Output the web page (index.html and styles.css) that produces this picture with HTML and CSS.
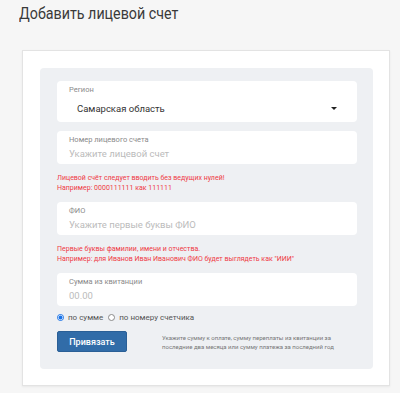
FILE: index.html
```html
<!DOCTYPE html>
<html lang="ru">
<head>
<meta charset="utf-8">
<title>Добавить лицевой счет</title>
<link rel="stylesheet" href="styles.css">
</head>
<body>
<h1 class="title"><span class="title-text">Добавить лицевой счет</span></h1>
<div class="card">
  <form class="panel">
    <div class="field field-select">
      <div class="label">Регион</div>
      <div class="select">
        <span class="select-value">Самарская область</span>
        <span class="caret"></span>
      </div>
    </div>
    <div class="field">
      <div class="label">Номер лицевого счета</div>
      <div class="placeholder">Укажите лицевой счет</div>
    </div>
    <div class="error">Лицевой счёт следует вводить без ведущих нулей!<br>Например: 0000111111 как 111111</div>
    <div class="field">
      <div class="label">ФИО</div>
      <div class="placeholder">Укажите первые буквы ФИО</div>
    </div>
    <div class="error">Первые буквы фамилии, имени и отчества.<br>Например: для Иванов Иван Иванович ФИО будет выглядеть как "ИИИ"</div>
    <div class="field">
      <div class="label">Сумма из квитанции</div>
      <div class="placeholder">00.00</div>
    </div>
    <div class="radios">
      <span class="radio radio-on"></span><span class="radio-text">по сумме</span>
      <span class="radio"></span><span class="radio-text">по номеру счетчика</span>
    </div>
    <div class="actions">
      <button type="button" class="btn">Привязать</button>
      <div class="hint">Укажите сумму к оплате, сумму переплаты из квитанции за<br>последние два месяца или сумму платежа за последний год</div>
    </div>
  </form>
</div>
</body>
</html>
```
FILE: styles.css
```css
html, body {
  margin: 0;
  padding: 0;
}
body {
  background: #f6f6f6;
  font-family: Roboto, "Noto Sans", sans-serif;
  color: #333;
  width: 400px;
  height: 393px;
  overflow: hidden;
}
.title {
  margin: 0;
  padding: 1px 19px 0;
  height: 50px;
  box-sizing: border-box;
  font-family: Roboto, sans-serif;
  font-weight: 400;
  font-size: 17px;
  line-height: 24px;
  color: #3a3a3a;
}
.title-text {
  display: inline-block;
  transform: scaleX(0.84);
  transform-origin: left center;
  white-space: nowrap;
}
.card {
  margin-left: 22px;
  width: 368px;
  box-sizing: border-box;
  background: #fff;
  border: 1px solid #e3e3e3;
  box-shadow: 0 1px 2px rgba(0,0,0,0.06);
  padding: 17px 16px 16px 17px;
}
.panel {
  margin: 0;
  background: #eef0f3;
  border-radius: 4px;
  padding: 13px 16px 17px 17px;
}
.field {
  background: #fff;
  border-radius: 4px;
  padding: 4px 12px 1px;
}
.field + .field {
  margin-top: 9px;
}
.label {
  font-size: 7.5px;
  line-height: 10px;
  color: #8a8a8a;
}
.placeholder {
  font-size: 9.5px;
  line-height: 18px;
  color: #bbbbbb;
}
.select {
  display: flex;
  align-items: center;
  justify-content: space-between;
  height: 26px;
  padding: 0 8px 0 8px;
}
.select-value {
  font-size: 9.5px;
  color: #333;
}
.caret {
  width: 0;
  height: 0;
  border-left: 3px solid transparent;
  border-right: 3px solid transparent;
  border-top: 3px solid #222;
}
.error {
  margin: 9px 0;
  font-size: 7px;
  line-height: 10px;
  color: #ee3a45;
}
.radios {
  display: flex;
  align-items: center;
  height: 12px;
  margin-top: 5px;
  font-size: 8px;
  color: #555;
}
.radio {
  border-radius: 50%;
  border: 1px solid #8a8a8a;
  background: #fff;
  box-sizing: border-box;
  width: 7px;
  height: 7px;
}
.radio-on {
  border-color: #1a73e8;
  background: radial-gradient(circle, #1a73e8 0 1.8px, #fff 2.2px);
}
.radio-text {
  margin: 0 5px 0 4px;
}
.actions {
  display: flex;
  align-items: center;
  margin-top: 8px;
}
.btn {
  width: 70px;
  height: 21px;
  border: 1px solid #2a5f96;
  border-radius: 2px;
  background: #316ca8;
  color: #fff;
  font-family: Roboto, sans-serif;
  font-size: 9px;
  font-weight: 500;
  padding: 0;
}
.hint {
  margin-left: 35px;
  font-size: 6px;
  line-height: 9px;
  color: #777;
}
```
